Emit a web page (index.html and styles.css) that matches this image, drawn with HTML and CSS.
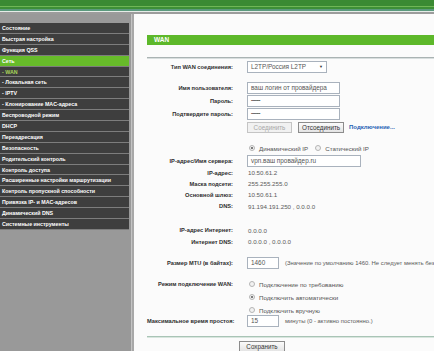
FILE: index.html
```html
<!DOCTYPE html>
<html lang="ru">
<head>
<meta charset="utf-8">
<title>WAN</title>
<link rel="stylesheet" href="styles.css">
</head>
<body>
<div class="header"></div>
<div class="layout">
  <nav class="sidebar">
    <div class="item">Состояние</div>
    <div class="item">Быстрая настройка</div>
    <div class="item">Функция QSS</div>
    <div class="item active">Сеть</div>
    <div class="item sub current">- WAN</div>
    <div class="item sub">- Локальная сеть</div>
    <div class="item sub">- IPTV</div>
    <div class="item sub">- Клонирование MAC-адреса</div>
    <div class="item">Беспроводной режим</div>
    <div class="item">DHCP</div>
    <div class="item">Переадресация</div>
    <div class="item">Безопасность</div>
    <div class="item">Родительский контроль</div>
    <div class="item">Контроль доступа</div>
    <div class="item">Расширенные настройки маршрутизации</div>
    <div class="item">Контроль пропускной способности</div>
    <div class="item">Привязка IP- и MAC-адресов</div>
    <div class="item">Динамический DNS</div>
    <div class="item">Системные инструменты</div>
  </nav>
  <main class="main">
    <div class="title">WAN</div>
    <div class="rule"></div>

    <div class="row r-type">
      <div class="label">Тип WAN соединения:</div>
      <div class="select">L2TP/Россия L2TP<span class="arrow">▼</span></div>
    </div>

    <div class="row r-user">
      <div class="label">Имя пользователя:</div>
      <div class="input wide">ваш логин от провайдера</div>
    </div>
    <div class="row r-tight">
      <div class="label">Пароль:</div>
      <div class="input wide"><span class="dots">••••••••••</span></div>
    </div>
    <div class="row r-tight">
      <div class="label">Подтвердите пароль:</div>
      <div class="input wide"><span class="dots">••••••••••</span></div>
    </div>
    <div class="row r-tight">
      <div class="label"></div>
      <div class="btn disabled">Соединить</div>
      <div class="btn btn-dis">Отсоединить</div>
      <span class="link">Подключение...</span>
    </div>

    <div class="row r-radio">
      <div class="label"></div>
      <span class="radio checked"></span><span class="opt">Динамический IP</span>
      <span class="radio"></span><span class="opt">Статический IP</span>
    </div>
    <div class="row r-tight">
      <div class="label">IP-адрес/Имя сервера:</div>
      <div class="input server">vpn.ваш провайдер.ru</div>
    </div>
    <div class="row r-val">
      <div class="label">IP-адрес:</div>
      <div class="val">10.50.61.2</div>
    </div>
    <div class="row r-val">
      <div class="label">Маска подсети:</div>
      <div class="val">255.255.255.0</div>
    </div>
    <div class="row r-val">
      <div class="label">Основной шлюз:</div>
      <div class="val">10.50.61.1</div>
    </div>
    <div class="row r-val">
      <div class="label">DNS:</div>
      <div class="val">91.194.191.250 , 0.0.0.0</div>
    </div>

    <div class="row r-val r-inet">
      <div class="label">IP-адрес Интернет:</div>
      <div class="val">0.0.0.0</div>
    </div>
    <div class="row r-val">
      <div class="label">Интернет DNS:</div>
      <div class="val">0.0.0.0 , 0.0.0.0</div>
    </div>

    <div class="row r-mtu">
      <div class="label">Размер MTU (в байтах):</div>
      <div class="input small">1460</div>
      <div class="val hint">(Значение по умолчанию 1460. Не следует менять без необходимости.)</div>
    </div>

    <div class="row r-mode">
      <div class="label">Режим подключение WAN:</div>
      <span class="radio"></span><span class="opt">Подключение по требованию</span>
    </div>
    <div class="row r-tight">
      <div class="label"></div>
      <span class="radio checked"></span><span class="opt">Подключить автоматически</span>
    </div>
    <div class="row r-tight">
      <div class="label"></div>
      <span class="radio"></span><span class="opt">Подключить вручную</span>
    </div>
    <div class="row r-idle">
      <div class="label">Максимальное время простоя:</div>
      <div class="input small">15</div>
      <div class="val hint">минуты (0 - активно постоянно.)</div>
    </div>

    <div class="rule2"></div>
    <div class="row r-save">
      <div class="label narrow"></div>
      <div class="btn save">Сохранить</div>
    </div>
  </main>
</div>
</body>
</html>
```
FILE: styles.css
```css
html, body {
  margin: 0;
  padding: 0;
  width: 434px;
  height: 351px;
  overflow: hidden;
  background: #fbfbfb;
  font-family: "Liberation Sans", Arial, sans-serif;
}

.header {
  height: 14px;
  background: linear-gradient(to bottom,
    #3a8a33 0, #3a8a33 6px,
    #6fb656 6px, #6fb656 7px,
    #3d8f37 7px, #3d8f37 9px,
    #5b9a7e 9px, #5b9a7e 11px,
    #e6ece8 11px, #e6ece8 12px,
    #9c9c9c 12px, #9c9c9c 14px);
}

.layout {
  display: flex;
  height: 337px;
}

.sidebar {
  width: 129px;
  padding: 9px 2px 0 0;
  background: #999999;
  border-right: 1px solid #c4c4c4;
  display: flex;
  flex-direction: column;
  flex: none;
}

.item {
  height: 9.9px;
  line-height: 10px;
  border-bottom: 1px solid #7d7d7d;
  background: #3e3e3e;
  color: #ffffff;
  font-weight: bold;
  font-size: 5.3px;
  padding-left: 2px;
  white-space: nowrap;
  overflow: hidden;
}

.item.active {
  background: #67bb2a;
}

.item.current {
  color: #a9d65a;
}

.main {
  flex: 1;
  min-width: 0;
  border-left: 2px solid #a8a8a8;
  padding-left: 13px;
  overflow: hidden;
  display: flex;
  flex-direction: column;
}

.title {
  margin-top: 21px;
  height: 10px;
  line-height: 10px;
  background: #5db82a;
  color: #ffffff;
  font-weight: bold;
  font-size: 6.5px;
  padding-left: 7px;
  flex: none;
}

.rule {
  margin-top: 12px;
  height: 1px;
  background: #aab3b3;
  border-bottom: 1px solid #d8dede;
  flex: none;
}

.rule2 {
  margin-top: 9px;
  height: 1px;
  background: #a9c4b6;
  border-bottom: 1px solid #d8e6de;
  flex: none;
}

.row {
  display: flex;
  align-items: center;
  height: 12px;
  flex: none;
  white-space: nowrap;
}

.r-type { margin-top: 2px; }
.r-user { margin-top: 9px; }
.r-tight { margin-top: 1px; }
.r-radio { margin-top: 9px; }
.r-val { height: 11.2px; }
.r-inet { margin-top: 13px; }
.r-mtu { margin-top: 10px; }
.r-mode { margin-top: 9px; }
.r-idle { margin-top: -1px; }
.r-save { margin-top: 3px; height: 11px; }

.label {
  width: 86px;
  margin-right: 14px;
  text-align: right;
  font-weight: bold;
  font-size: 5.7px;
  color: #2e2e2e;
  flex: none;
}

.label.narrow { width: 78px; }

.val {
  font-size: 6.2px;
  color: #5a5a5a;
  padding-left: 1px;
}

.hint {
  margin-left: 5px;
  font-size: 5.9px;
}

.input, .select {
  box-sizing: border-box;
  height: 12px;
  line-height: 10px;
  border: 1px solid #a9b2bd;
  background: #ffffff;
  font-size: 6.4px;
  color: #555555;
  padding-left: 3px;
  flex: none;
}

.input.wide { width: 93px; }
.input.server { width: 114px; }
.input.small { width: 32px; }

.dots {
  font-size: 4px;
  letter-spacing: -0.5px;
  color: #444;
  vertical-align: middle;
}

.select {
  width: 80px;
  display: flex;
  justify-content: space-between;
  padding-right: 3px;
}

.arrow {
  font-size: 4px;
  color: #333;
}

.btn {
  box-sizing: border-box;
  height: 11px;
  line-height: 9px;
  border: 1px solid #8c8c8c;
  background: linear-gradient(#fbfbfb, #e4e4e4);
  font-size: 6.3px;
  color: #333333;
  padding: 0 3px;
  text-align: center;
  flex: none;
}

.btn.disabled {
  width: 45px;
  color: #a8a8a8;
  border-color: #c4c4c4;
  background: #f1f1f1;
}

.btn.btn-dis {
  width: 46px;
  margin-left: 6px;
}

.btn.save {
  width: 46px;
}

.link {
  margin-left: 5px;
  font-size: 6px;
  color: #1f5fb4;
  font-weight: bold;
}

.radio {
  box-sizing: border-box;
  width: 6px;
  height: 6px;
  border-radius: 50%;
  border: 1px solid #b5b5b5;
  background: #f2f2f2;
  margin-left: 2px;
  margin-right: 4px;
  flex: none;
  position: relative;
}

.radio.checked::after {
  content: "";
  position: absolute;
  left: 1px;
  top: 1px;
  width: 2px;
  height: 2px;
  border-radius: 50%;
  background: #555;
}

.opt {
  font-size: 6.2px;
  color: #555555;
  margin-right: 5px;
}
```
